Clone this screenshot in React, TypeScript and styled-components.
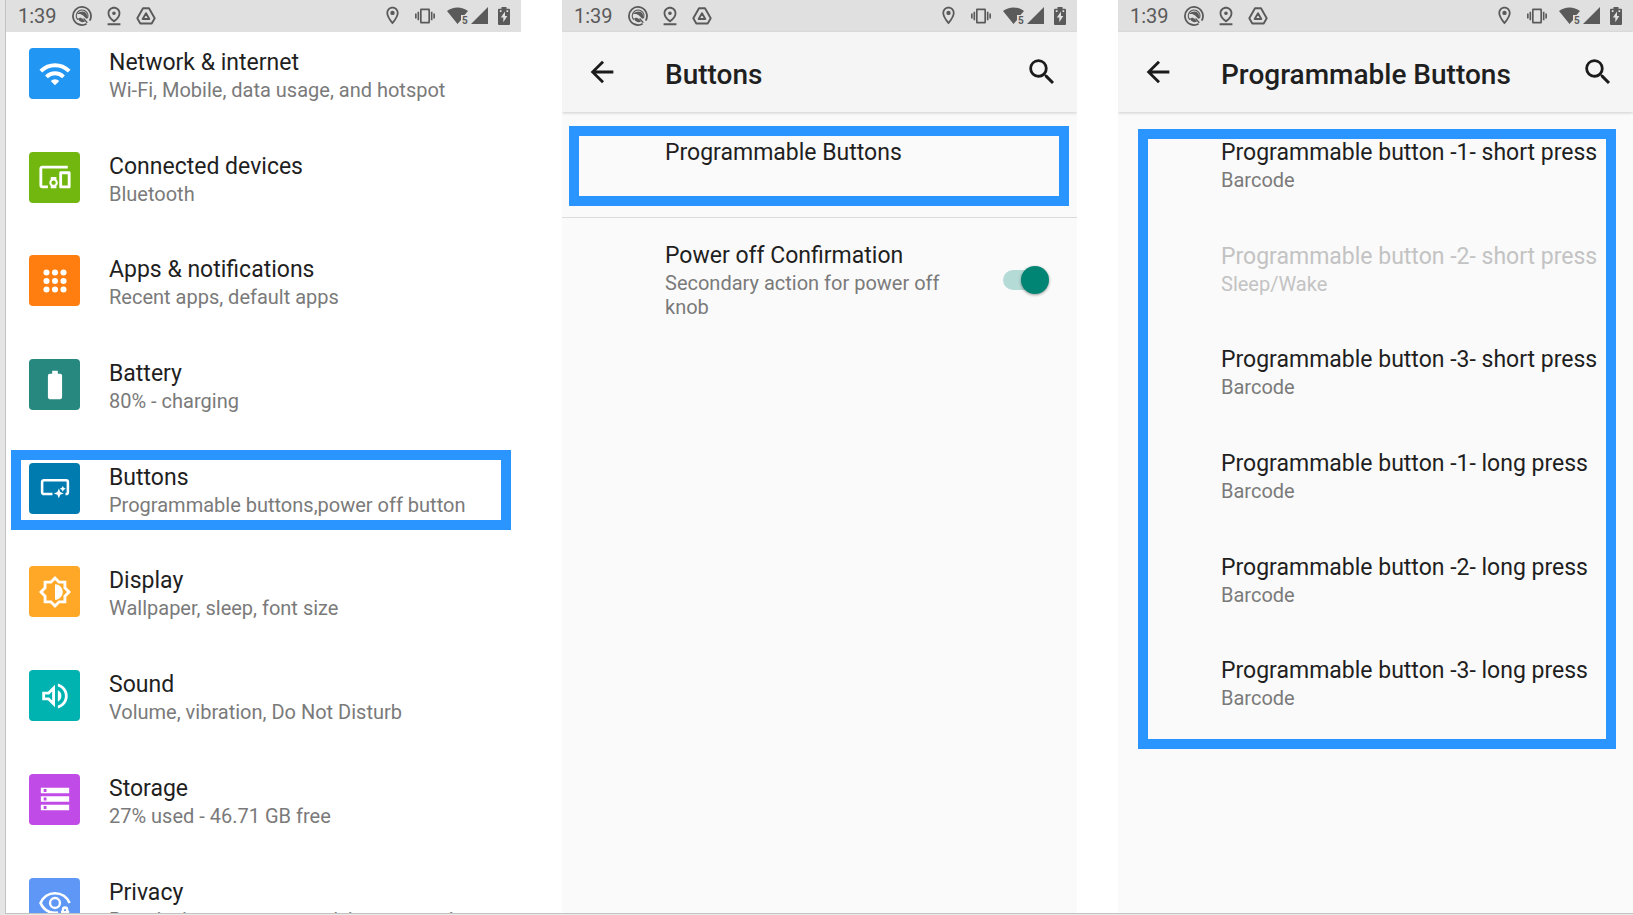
import React from "react";
import styled, { createGlobalStyle, css } from "styled-components";
import {
  MdArrowBack,
  MdBatteryFull,
  MdDevicesOther,
  MdOutlineBrightness6,
  MdOutlineLocationOn,
  MdOutlinePinDrop,
  MdOutlineVolumeUp,
  MdSearch,
  MdStorage,
  MdVibration,
  MdWifi,
} from "react-icons/md";

const GlobalStyle = createGlobalStyle`
  *, *::before, *::after { box-sizing: border-box; }
  body {
    margin: 0;
    background: #fff;
    color: #1f1f1f;
    font-family: Roboto, "Liberation Sans", sans-serif;
  }
`;

const highlightBlue = "#2b95ff";

const Page = styled.main`
  height: 100vh;
  overflow: hidden;
  background: #fff;
  border-left: 5px solid #e5e5e5;
  border-bottom: 1px solid #e9e9e9;
`;

const Frame = styled.div`
  display: grid;
  grid-template-columns: repeat(3, minmax(0, 1fr));
  grid-template-rows: minmax(0, 1fr);
  column-gap: 41px;
  height: 100%;
  overflow: hidden;
  border-left: 1px solid #c3c3c3;
  border-bottom: 1px solid #c3c3c3;
`;

const Screen = styled.section<{ $plain?: boolean }>`
  display: flex;
  flex-direction: column;
  min-width: 0;
  overflow: hidden;
  background: ${(p) => (p.$plain ? "#fff" : "#fafafa")};
`;

const StatusBar = styled.div`
  display: flex;
  flex: none;
  align-items: center;
  justify-content: space-between;
  height: 32px;
  padding: 0 11px 1px 12px;
  background: #e0e0e0;
  color: #5a5a5a;
`;

const StatusGroup = styled.div<{ $gap: number }>`
  display: flex;
  align-items: center;
  gap: ${(p) => p.$gap}px;
  svg { display: block; flex: none; }
`;

const Clock = styled.time`
  margin-right: 4px;
  font-size: 20px;
  line-height: 30px;
`;

const Header = styled.header`
  position: relative;
  display: flex;
  flex: none;
  align-items: center;
  height: 80px;
  padding: 0 18px 0 23px;
  background: #f5f5f5;
  box-shadow: 0 1px 3px rgba(0, 0, 0, 0.18);
`;

const Title = styled.h1`
  flex: 1;
  margin: 6px 0 0;
  font-size: 28px;
  font-weight: 500;
  line-height: 34px;
  white-space: nowrap;
`;

const IconButton = styled.button<{ $wide?: boolean }>`
  flex: none;
  display: flex;
  width: ${(p) => (p.$wide ? "80px" : "34px")};
  padding: 0;
  border: 0;
  background: none;
  color: #1b1b1b;
  cursor: pointer;
`;

const List = styled.ul<{ $fill?: string }>`
  display: grid;
  flex: none;
  grid-auto-rows: 1fr;
  min-height: ${(p) => p.$fill ?? "0"};
  margin: 0;
  padding: 0;
  list-style: none;
`;

const Content = styled.div`
  position: relative;
  flex: none;
  padding-top: 10px;
`;

const Item = styled.li<{ $divided?: boolean }>`
  position: relative;
  min-height: 103px;
  ${(p) =>
    p.$divided &&
    css`
      &::after {
        content: "";
        position: absolute;
        inset: auto 0 7px;
        border-bottom: 1px solid #dcdcdc;
      }
    `}
`;

const rowStyle = css`
  display: flex;
  align-items: flex-start;
  width: 100%;
  min-height: 103px;
  padding: 16px 23px 0;
  border: 0;
  background: none;
  color: inherit;
  font: inherit;
  text-align: left;
  cursor: pointer;
`;

const Row = styled.button<{ $inset?: boolean }>`
  ${rowStyle}
  gap: 29px;
  ${(p) => p.$inset && css`padding: 16px 0 0 103px;`}
  &:disabled { color: #c3c3c3; cursor: default; }
  &:disabled span { color: inherit; }
`;

const SwitchRow = styled.label`
  ${rowStyle}
  gap: 36px;
  padding: 16px 28px 0 103px;
`;

const Tile = styled.span<{ $color: string }>`
  display: flex;
  flex: none;
  align-items: center;
  justify-content: center;
  width: 51px;
  height: 51px;
  border-radius: 4px;
  background: ${(p) => p.$color};
  color: #fff;
`;

const Texts = styled.span`
  display: flex;
  flex: 1;
  flex-direction: column;
  gap: 1px;
  min-width: 0;
  padding-top: 1px;
`;

const Name = styled.span`
  font-size: 23px;
  line-height: 28px;
  white-space: nowrap;
`;

const Summary = styled.span`
  color: #7a7a7a;
  font-size: 20px;
  line-height: 24px;
`;

const Switch = styled.input`
  appearance: none;
  position: relative;
  flex: none;
  width: 48px;
  height: 28px;
  margin: 25px 0 0;
  cursor: pointer;
  &::before {
    content: "";
    position: absolute;
    inset: 4px 2px;
    border-radius: 10px;
    background: #c4c4c4;
  }
  &::after {
    content: "";
    position: absolute;
    top: 0;
    left: 0;
    width: 28px;
    height: 28px;
    border-radius: 50%;
    background: #f1f1f1;
    box-shadow: 0 1px 3px rgba(0, 0, 0, 0.4);
  }
  &:checked::before { background: #b5dbd6; }
  &:checked::after { left: 20px; background: #008575; }
`;

const Highlight = styled.div<{ $inset: string }>`
  position: absolute;
  inset: ${(p) => p.$inset};
  border: 10px solid ${highlightBlue};
  pointer-events: none;
`;

function AppsIcon() {
  return (
    <svg width="34" height="34" viewBox="0 0 24 24" fill="currentColor" aria-hidden="true">
      {[6, 12, 18].map((y) => [6, 12, 18].map((x) => <circle key={`${x}-${y}`} cx={x} cy={y} r="2.15" />))}
    </svg>
  );
}

function ButtonsIcon() {
  return (
    <svg width="34" height="34" viewBox="0 0 24 24" fill="none" aria-hidden="true">
      <path d="M10.2 16.3H4.2A1.3 1.3 0 0 1 2.9 15V7.8a1.3 1.3 0 0 1 1.3-1.3h15.6a1.3 1.3 0 0 1 1.300 1.300V15a1.300 1.300 0 0 1-1.300 1.300h-.4" stroke="currentColor" strokeWidth="1.8" />
      <path d="M14.700 12.300l1 2.500 2.500 1-2.500 1-1 2.500-1-2.500-2.500-1 2.500-1z" fill="currentColor" />
      <path d="M17.500 10.500l.7 1.400 1.400.7-1.400.7-.7 1.400-.7-1.400-1.400-.7 1.400-.7z" fill="currentColor" />
    </svg>
  );
}

function PrivacyIcon() {
  return (
    <svg width="34" height="34" viewBox="0 0 24 24" fill="none" stroke="currentColor" aria-hidden="true">
      <path d="M22.300 12C20.500 7.900 16.600 5.100 12 5.100S3.600 7.900 1.800 12C3.600 16.100 7.400 18.900 12 18.900c.8 0 1.500-.1 2.200-.2" strokeWidth="1.900" />
      <circle cx="12" cy="12" r="3.500" strokeWidth="1.700" />
      <path d="M16.200 17.400v5.200h5.800v-5.200h-.6v-.8a2.300 2.300 0 0 0-4.600 0v.8zm2.200-1h1.400v1.200h-1.400z" fill="currentColor" fillRule="evenodd" stroke="none" />
    </svg>
  );
}

function SwirlIcon() {
  return (
    <svg width="20" height="20" viewBox="0 0 20 20" fill="none" stroke="currentColor" aria-hidden="true">
      <path d="M14.600 17.700A9 9 0 1 1 17.700 14.600" strokeWidth="1.800" />
      <path d="M5.800 13.800A5.800 5.800 0 1 1 15.400 12.300" strokeWidth="1.300" />
      <path d="M5 8.200C7.500 4.600 12.500 4.500 14.500 7.700c.9 1.500.9 3.800.1 5.400l-3.300-3.400C9.700 8.200 7.400 7.500 5 8.200z" fill="currentColor" stroke="none" />
      <path d="M6 12.700c1.600-1.400 3.600-.9 5 .6l2 2.300c-2.600 1.300-5.600.2-7-2.900z" fill="currentColor" stroke="none" />
      <path d="M11.500 12.500l3.800 4.200" strokeWidth="1.400" />
    </svg>
  );
}

function DriveIcon() {
  return (
    <svg width="20" height="18" viewBox="0 0 20 18" fill="none" stroke="currentColor" strokeLinejoin="round" aria-hidden="true">
      <path d="M7 1.300h6L18.700 11.300 15.700 16.500H4.300L1.300 11.300z" strokeWidth="1.900" />
      <path d="M10 6.200 13.300 12H6.700z" strokeWidth="1.900" />
    </svg>
  );
}

function WifiStatusIcon() {
  return (
    <svg width="22" height="18" viewBox="0 0 22 18" fill="currentColor" aria-hidden="true">
      <path d="M0 4C6-.8 15-.8 21 4L17.500 8H14v5L10.500 17z" />
      <text x="15" y="16.500" fontSize="10" fontWeight="700" fontFamily="Roboto, sans-serif">5</text>
    </svg>
  );
}

function SignalIcon() {
  return (
    <svg width="17" height="17" viewBox="0 0 17 17" fill="currentColor" aria-hidden="true">
      <path d="M17 0v17H0z" />
    </svg>
  );
}

function BatteryIcon() {
  return (
    <svg width="12" height="18" viewBox="0 0 12 18" fill="currentColor" aria-hidden="true">
      <path fillRule="evenodd" d="M3.500 0h5v1.800H11a1 1 0 0 1 1 1V17a1 1 0 0 1-1 1H1a1 1 0 0 1-1-1V2.800a1 1 0 0 1 1-1h2.500zM7 4.500 2.800 10.500h2.500v4.800l4-6.300H7z" />
      <path d="M1.800 3.300h1.700v1.700H1.800zM8.500 3.300h1.700v1.700H8.500z" fill="#e0e0e0" />
    </svg>
  );
}

function Status() {
  return (
    <StatusBar>
      <StatusGroup $gap={11}>
        <Clock>1:39</Clock>
        <SwirlIcon />
        <MdOutlinePinDrop size={22} />
        <DriveIcon />
      </StatusGroup>
      <StatusGroup $gap={12}>
        <MdOutlineLocationOn size={21} />
        <MdVibration size={20} />
        <StatusGroup $gap={10}>
          <StatusGroup $gap={2}>
            <WifiStatusIcon />
            <SignalIcon />
          </StatusGroup>
          <BatteryIcon />
        </StatusGroup>
      </StatusGroup>
    </StatusBar>
  );
}

function TopBar({ title }: { title: string }) {
  return (
    <Header>
      <IconButton $wide aria-label="Back">
        <MdArrowBack size={34} />
      </IconButton>
      <Title>{title}</Title>
      <IconButton aria-label="Search">
        <MdSearch size={34} />
      </IconButton>
    </Header>
  );
}

const settings = [
  { name: "Network & internet", summary: "Wi-Fi, Mobile, data usage, and hotspot", color: "#2196f3", icon: <MdWifi size={34} /> },
  { name: "Connected devices", summary: "Bluetooth", color: "#72b70f", icon: <MdDevicesOther size={34} /> },
  { name: "Apps & notifications", summary: "Recent apps, default apps", color: "#ff7e0f", icon: <AppsIcon /> },
  { name: "Battery", summary: "80% - charging", color: "#26887f", icon: <MdBatteryFull size={34} /> },
  { name: "Buttons", summary: "Programmable buttons,power off button", color: "#007bb0", icon: <ButtonsIcon />, highlighted: true },
  { name: "Display", summary: "Wallpaper, sleep, font size", color: "#ffa726", icon: <MdOutlineBrightness6 size={34} /> },
  { name: "Sound", summary: "Volume, vibration, Do Not Disturb", color: "#00b2b0", icon: <MdOutlineVolumeUp size={34} /> },
  { name: "Storage", summary: "27% used - 46.71 GB free", color: "#c04be6", icon: <MdStorage size={34} /> },
  { name: "Privacy", summary: "Permissions, account activity, personal data", color: "#5e97f6", icon: <PrivacyIcon /> },
];

const programmable = [
  { name: "Programmable button -1- short press", summary: "Barcode" },
  { name: "Programmable button -2- short press", summary: "Sleep/Wake", disabled: true },
  { name: "Programmable button -3- short press", summary: "Barcode" },
  { name: "Programmable button -1- long press", summary: "Barcode" },
  { name: "Programmable button -2- long press", summary: "Barcode" },
  { name: "Programmable button -3- long press", summary: "Barcode" },
];

export default function App() {
  return (
    <>
      <GlobalStyle />
      <Page>
        <Frame>
          <Screen $plain>
            <Status />
            <List $fill="102vh">
              {settings.map((s) => (
                <Item key={s.name}>
                  <Row>
                    <Tile $color={s.color}>{s.icon}</Tile>
                    <Texts>
                      <Name>{s.name}</Name>
                      <Summary>{s.summary}</Summary>
                    </Texts>
                  </Row>
                  {s.highlighted && <Highlight $inset="3px 10px 20px 5px" />}
                </Item>
              ))}
            </List>
          </Screen>
          <Screen>
            <Status />
            <TopBar title="Buttons" />
            <Content>
              <List>
                <Item $divided>
                  <Row $inset>
                    <Texts>
                      <Name>Programmable Buttons</Name>
                    </Texts>
                  </Row>
                  <Highlight $inset="4px 8px 19px 7px" />
                </Item>
                <Item>
                  <SwitchRow>
                    <Texts>
                      <Name>Power off Confirmation</Name>
                      <Summary>Secondary action for power off knob</Summary>
                    </Texts>
                    <Switch type="checkbox" role="switch" defaultChecked />
                  </SwitchRow>
                </Item>
              </List>
            </Content>
          </Screen>
          <Screen>
            <Status />
            <TopBar title="Programmable Buttons" />
            <Content>
              <List $fill="68vh">
                {programmable.map((p) => (
                  <Item key={p.name}>
                    <Row $inset disabled={p.disabled}>
                      <Texts>
                        <Name>{p.name}</Name>
                        <Summary>{p.summary}</Summary>
                      </Texts>
                    </Row>
                  </Item>
                ))}
              </List>
              <Highlight $inset="17px 17px -5px 20px" />
            </Content>
          </Screen>
        </Frame>
      </Page>
    </>
  );
}
